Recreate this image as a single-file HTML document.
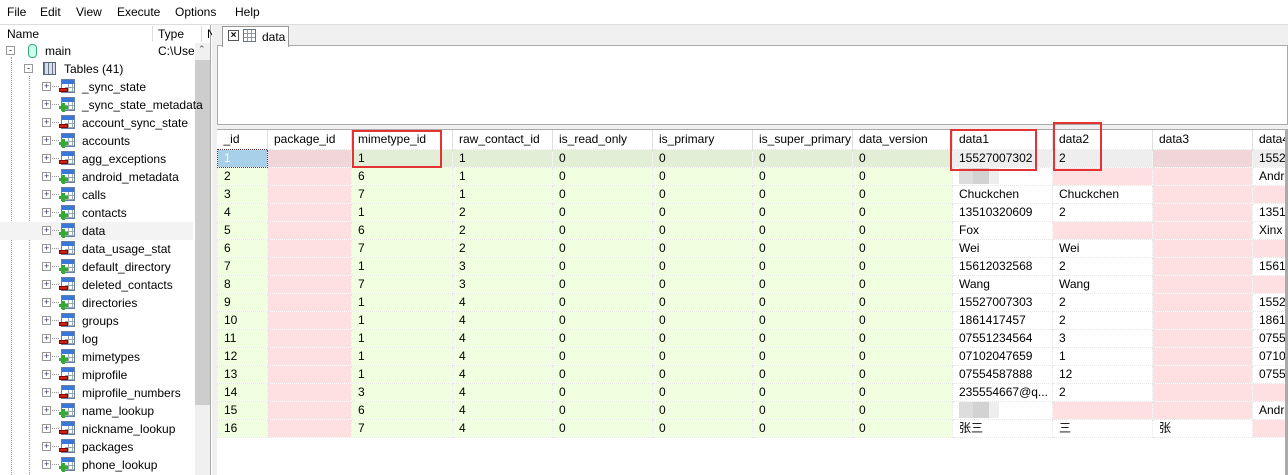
<!DOCTYPE html>
<html><head><meta charset="utf-8"><style>
*{margin:0;padding:0;box-sizing:border-box}
body{width:1288px;height:475px;overflow:hidden;background:#fff;font:12px "Liberation Sans","Noto Sans CJK SC",sans-serif;color:#000;position:relative}
.a{position:absolute}
.menu span{position:absolute;top:5px}
.tr{position:absolute;left:0;height:18px;width:193px;line-height:18px}
.tr .pl{position:absolute;left:42px;top:4px;width:9px;height:9px;border:1px solid #999;background:#fff;font-size:9px;line-height:7px;text-align:center;color:#335}
.tr .ic{position:absolute;left:61px;top:1px;width:14px;height:14px;border:1px solid #6a7fa8;background:linear-gradient(#3a78d8 0 4px,#fff 4px);}
.tr .ic:after{content:"";position:absolute;left:3px;top:4px;width:9px;height:8px;background:repeating-linear-gradient(90deg,transparent 0 3px,#9aa 3px 4px),repeating-linear-gradient(transparent 0 3px,#9aa 3px 4px)}
.tr .r,.tr .g{position:absolute;left:59px;top:9px;width:9px;height:5px;z-index:2}
.tr .r{background:#c21;border:1px solid #800;height:4px;top:10px}
.tr .g{width:9px;height:9px;top:7px;background:linear-gradient(90deg,transparent 3px,#3a3 3px 6px,transparent 6px),linear-gradient(transparent 3px,#3a3 3px 6px,transparent 6px)}
.tr .t{position:absolute;left:82px;top:0;color:#000}
.tr .d{position:absolute;left:52px;top:8px;width:7px;border-top:1px dotted #999}
table{border-collapse:collapse;table-layout:fixed;position:absolute;left:217px;top:130px;width:1076px}
td{height:18px;padding:0 0 0 6px;white-space:nowrap;overflow:hidden;border:1px dotted #e6e6e6;line-height:17px}
th{height:19px;font-weight:normal;text-align:left;padding-left:6px;border-right:1px solid #e0e0e0;background:#fff;white-space:nowrap;overflow:hidden}
.n{background:#f0ffe0}.p{background:#ffe0e2}.w{background:#fff}
tr.s .n{background:#e2eed6}tr.s .p{background:#f0d6d8}tr.s .w{background:#eee}
.blur{display:inline-block;width:40px;height:16px;background:linear-gradient(90deg,#ddd 0 14px,#d2d2d2 14px 30px,#eee 30px);vertical-align:middle}
.box{position:absolute;border:2px solid #e53333}
</style></head><body>
<div class="menu"><span style="left:7px">File</span><span style="left:40px">Edit</span><span style="left:76px">View</span><span style="left:117px">Execute</span><span style="left:175px">Options</span><span style="left:235px">Help</span></div>
<div class="a" style="left:0;top:24px;width:1288px;border-top:1px solid #ddd"></div>
<div class="a" style="left:0;top:25px;width:211px;height:450px;border-right:1px solid #aaa"></div>
<div class="a" style="left:7px;top:27px">Name</div>
<div class="a" style="left:152px;top:26px;height:16px;border-left:1px solid #ddd"></div>
<div class="a" style="left:158px;top:27px">Type</div>
<div class="a" style="left:201px;top:26px;height:16px;border-left:1px solid #ddd"></div>
<div class="a" style="left:207px;top:27px">N</div>
<div class="a" style="left:195px;top:43px;width:15px;height:432px;background:#f0f0f0"></div>
<div class="a" style="left:195px;top:60px;width:15px;height:345px;background:#cdcdcd"></div>
<div class="a" style="left:198px;top:44px;font-size:9px;color:#555">&#8963;</div>
<div class="a" style="left:11px;top:57px;height:418px;border-left:1px dotted #999"></div>
<div class="a" style="left:29px;top:76px;height:399px;border-left:1px dotted #999"></div>
<div class="a" style="left:6px;top:46px;width:9px;height:9px;border:1px solid #999;font-size:9px;line-height:6px;text-align:center">-</div>
<div class="a" style="left:28px;top:44px;width:9px;height:14px;border:1px solid #3a7;border-radius:4px;background:#cfe"></div>
<div class="a" style="left:45px;top:44px">main</div>
<div class="a" style="left:158px;top:44px;width:36px;overflow:hidden;white-space:nowrap">C:\Users</div>
<div class="a" style="left:24px;top:64px;width:9px;height:9px;border:1px solid #999;font-size:9px;line-height:6px;text-align:center">-</div>
<div class="a" style="left:43px;top:62px;width:13px;height:13px;background:repeating-linear-gradient(90deg,#678 0 1px,#dde 1px 4px);border:1px solid #567"></div>
<div class="a" style="left:64px;top:62px">Tables (41)</div>
<div class="a" style="left:0;top:222px;width:193px;height:18px;background:#f3f3f3"></div>
<div class="tr" style="top:78px"><i class="pl">+</i><i class="d"></i><i class="ic"></i><i class="r"></i><span class="t">_sync_state</span></div>
<div class="tr" style="top:96px"><i class="pl">+</i><i class="d"></i><i class="ic"></i><i class="g"></i><span class="t">_sync_state_metadata</span></div>
<div class="tr" style="top:114px"><i class="pl">+</i><i class="d"></i><i class="ic"></i><i class="r"></i><span class="t">account_sync_state</span></div>
<div class="tr" style="top:132px"><i class="pl">+</i><i class="d"></i><i class="ic"></i><i class="g"></i><span class="t">accounts</span></div>
<div class="tr" style="top:150px"><i class="pl">+</i><i class="d"></i><i class="ic"></i><i class="r"></i><span class="t">agg_exceptions</span></div>
<div class="tr" style="top:168px"><i class="pl">+</i><i class="d"></i><i class="ic"></i><i class="g"></i><span class="t">android_metadata</span></div>
<div class="tr" style="top:186px"><i class="pl">+</i><i class="d"></i><i class="ic"></i><i class="g"></i><span class="t">calls</span></div>
<div class="tr" style="top:204px"><i class="pl">+</i><i class="d"></i><i class="ic"></i><i class="g"></i><span class="t">contacts</span></div>
<div class="tr" style="top:222px"><i class="pl">+</i><i class="d"></i><i class="ic"></i><i class="g"></i><span class="t">data</span></div>
<div class="tr" style="top:240px"><i class="pl">+</i><i class="d"></i><i class="ic"></i><i class="r"></i><span class="t">data_usage_stat</span></div>
<div class="tr" style="top:258px"><i class="pl">+</i><i class="d"></i><i class="ic"></i><i class="g"></i><span class="t">default_directory</span></div>
<div class="tr" style="top:276px"><i class="pl">+</i><i class="d"></i><i class="ic"></i><i class="r"></i><span class="t">deleted_contacts</span></div>
<div class="tr" style="top:294px"><i class="pl">+</i><i class="d"></i><i class="ic"></i><i class="g"></i><span class="t">directories</span></div>
<div class="tr" style="top:312px"><i class="pl">+</i><i class="d"></i><i class="ic"></i><i class="r"></i><span class="t">groups</span></div>
<div class="tr" style="top:330px"><i class="pl">+</i><i class="d"></i><i class="ic"></i><i class="r"></i><span class="t">log</span></div>
<div class="tr" style="top:348px"><i class="pl">+</i><i class="d"></i><i class="ic"></i><i class="g"></i><span class="t">mimetypes</span></div>
<div class="tr" style="top:366px"><i class="pl">+</i><i class="d"></i><i class="ic"></i><i class="r"></i><span class="t">miprofile</span></div>
<div class="tr" style="top:384px"><i class="pl">+</i><i class="d"></i><i class="ic"></i><i class="r"></i><span class="t">miprofile_numbers</span></div>
<div class="tr" style="top:402px"><i class="pl">+</i><i class="d"></i><i class="ic"></i><i class="g"></i><span class="t">name_lookup</span></div>
<div class="tr" style="top:420px"><i class="pl">+</i><i class="d"></i><i class="ic"></i><i class="r"></i><span class="t">nickname_lookup</span></div>
<div class="tr" style="top:438px"><i class="pl">+</i><i class="d"></i><i class="ic"></i><i class="r"></i><span class="t">packages</span></div>
<div class="tr" style="top:456px"><i class="pl">+</i><i class="d"></i><i class="ic"></i><i class="g"></i><span class="t">phone_lookup</span></div>
<div class="a" style="left:212px;top:25px;width:5px;height:450px;background:#f0f0f0"></div>
<div class="a" style="left:217px;top:25px;width:1071px;height:21px;background:#f0f0f0;border-bottom:1px solid #aaa"></div>
<div class="a" style="left:222px;top:26px;width:67px;height:21px;background:#fff;border:1px solid #999;border-bottom:none"></div>
<div class="a" style="left:228px;top:30px;width:11px;height:11px;border:1px solid #555;font-size:10px;line-height:9px;text-align:center;font-weight:bold">×</div>
<div class="a" style="left:243px;top:29px;width:13px;height:13px;border:1px solid #678;background:repeating-linear-gradient(90deg,transparent 0 3px,#89a 3px 4px),repeating-linear-gradient(#fff 0 3px,#89a 3px 4px)"></div>
<div class="a" style="left:262px;top:30px">data</div>
<div class="a" style="left:217px;top:46px;width:1071px;height:78px;border-left:1px solid #aaa;border-right:1px solid #aaa"></div>
<div class="a" style="left:217px;top:124px;width:1071px;height:6px;background:#f0f0f0;border-top:1px solid #aaa;border-bottom:1px solid #aaa"></div>
<table>
<colgroup><col style="width:50px"><col style="width:84px"><col style="width:101px"><col style="width:100px"><col style="width:100px"><col style="width:100px"><col style="width:100px"><col style="width:100px"><col style="width:100px"><col style="width:100px"><col style="width:100px"><col style="width:41px"></colgroup>
<tr><th>_id</th><th>package_id</th><th>mimetype_id</th><th>raw_contact_id</th><th>is_read_only</th><th>is_primary</th><th>is_super_primary</th><th>data_version</th><th>data1</th><th>data2</th><th>data3</th><th>data4</th></tr>
<tr class="s"><td style="background:#a8d0e8;color:#fff;border:1px dotted #633">1</td><td class="p"></td><td class="n">1</td><td class="n">1</td><td class="n">0</td><td class="n">0</td><td class="n">0</td><td class="n">0</td><td class="w">15527007302</td><td class="w">2</td><td class="p"></td><td class="w">15527</td></tr>
<tr><td class="n">2</td><td class="p"></td><td class="n">6</td><td class="n">1</td><td class="n">0</td><td class="n">0</td><td class="n">0</td><td class="n">0</td><td class="w"><span class="blur"></span></td><td class="p"></td><td class="p"></td><td class="w">Andro</td></tr>
<tr><td class="n">3</td><td class="p"></td><td class="n">7</td><td class="n">1</td><td class="n">0</td><td class="n">0</td><td class="n">0</td><td class="n">0</td><td class="w">Chuckchen</td><td class="w">Chuckchen</td><td class="p"></td><td class="p"></td></tr>
<tr><td class="n">4</td><td class="p"></td><td class="n">1</td><td class="n">2</td><td class="n">0</td><td class="n">0</td><td class="n">0</td><td class="n">0</td><td class="w">13510320609</td><td class="w">2</td><td class="p"></td><td class="w">13510</td></tr>
<tr><td class="n">5</td><td class="p"></td><td class="n">6</td><td class="n">2</td><td class="n">0</td><td class="n">0</td><td class="n">0</td><td class="n">0</td><td class="w">Fox</td><td class="p"></td><td class="p"></td><td class="w">Xinx</td></tr>
<tr><td class="n">6</td><td class="p"></td><td class="n">7</td><td class="n">2</td><td class="n">0</td><td class="n">0</td><td class="n">0</td><td class="n">0</td><td class="w">Wei</td><td class="w">Wei</td><td class="p"></td><td class="p"></td></tr>
<tr><td class="n">7</td><td class="p"></td><td class="n">1</td><td class="n">3</td><td class="n">0</td><td class="n">0</td><td class="n">0</td><td class="n">0</td><td class="w">15612032568</td><td class="w">2</td><td class="p"></td><td class="w">15612</td></tr>
<tr><td class="n">8</td><td class="p"></td><td class="n">7</td><td class="n">3</td><td class="n">0</td><td class="n">0</td><td class="n">0</td><td class="n">0</td><td class="w">Wang</td><td class="w">Wang</td><td class="p"></td><td class="p"></td></tr>
<tr><td class="n">9</td><td class="p"></td><td class="n">1</td><td class="n">4</td><td class="n">0</td><td class="n">0</td><td class="n">0</td><td class="n">0</td><td class="w">15527007303</td><td class="w">2</td><td class="p"></td><td class="w">15527</td></tr>
<tr><td class="n">10</td><td class="p"></td><td class="n">1</td><td class="n">4</td><td class="n">0</td><td class="n">0</td><td class="n">0</td><td class="n">0</td><td class="w">1861417457</td><td class="w">2</td><td class="p"></td><td class="w">18614</td></tr>
<tr><td class="n">11</td><td class="p"></td><td class="n">1</td><td class="n">4</td><td class="n">0</td><td class="n">0</td><td class="n">0</td><td class="n">0</td><td class="w">07551234564</td><td class="w">3</td><td class="p"></td><td class="w">07551</td></tr>
<tr><td class="n">12</td><td class="p"></td><td class="n">1</td><td class="n">4</td><td class="n">0</td><td class="n">0</td><td class="n">0</td><td class="n">0</td><td class="w">07102047659</td><td class="w">1</td><td class="p"></td><td class="w">07102</td></tr>
<tr><td class="n">13</td><td class="p"></td><td class="n">1</td><td class="n">4</td><td class="n">0</td><td class="n">0</td><td class="n">0</td><td class="n">0</td><td class="w">07554587888</td><td class="w">12</td><td class="p"></td><td class="w">07554</td></tr>
<tr><td class="n">14</td><td class="p"></td><td class="n">3</td><td class="n">4</td><td class="n">0</td><td class="n">0</td><td class="n">0</td><td class="n">0</td><td class="w">235554667@q...</td><td class="w">2</td><td class="p"></td><td class="p"></td></tr>
<tr><td class="n">15</td><td class="p"></td><td class="n">6</td><td class="n">4</td><td class="n">0</td><td class="n">0</td><td class="n">0</td><td class="n">0</td><td class="w"><span class="blur"></span></td><td class="p"></td><td class="p"></td><td class="w">Andro</td></tr>
<tr><td class="n">16</td><td class="p"></td><td class="n">7</td><td class="n">4</td><td class="n">0</td><td class="n">0</td><td class="n">0</td><td class="n">0</td><td class="w">张三</td><td class="w">三</td><td class="w">张</td><td class="p"></td></tr>
</table>
<div class="a" style="left:1285px;top:130px;width:3px;height:345px;background:#aaa"></div>
<div class="box" style="left:352px;top:130px;width:90px;height:38px"></div>
<div class="box" style="left:950px;top:129px;width:87px;height:42px"></div>
<div class="box" style="left:1053px;top:122px;width:49px;height:49px"></div>
</body></html>
